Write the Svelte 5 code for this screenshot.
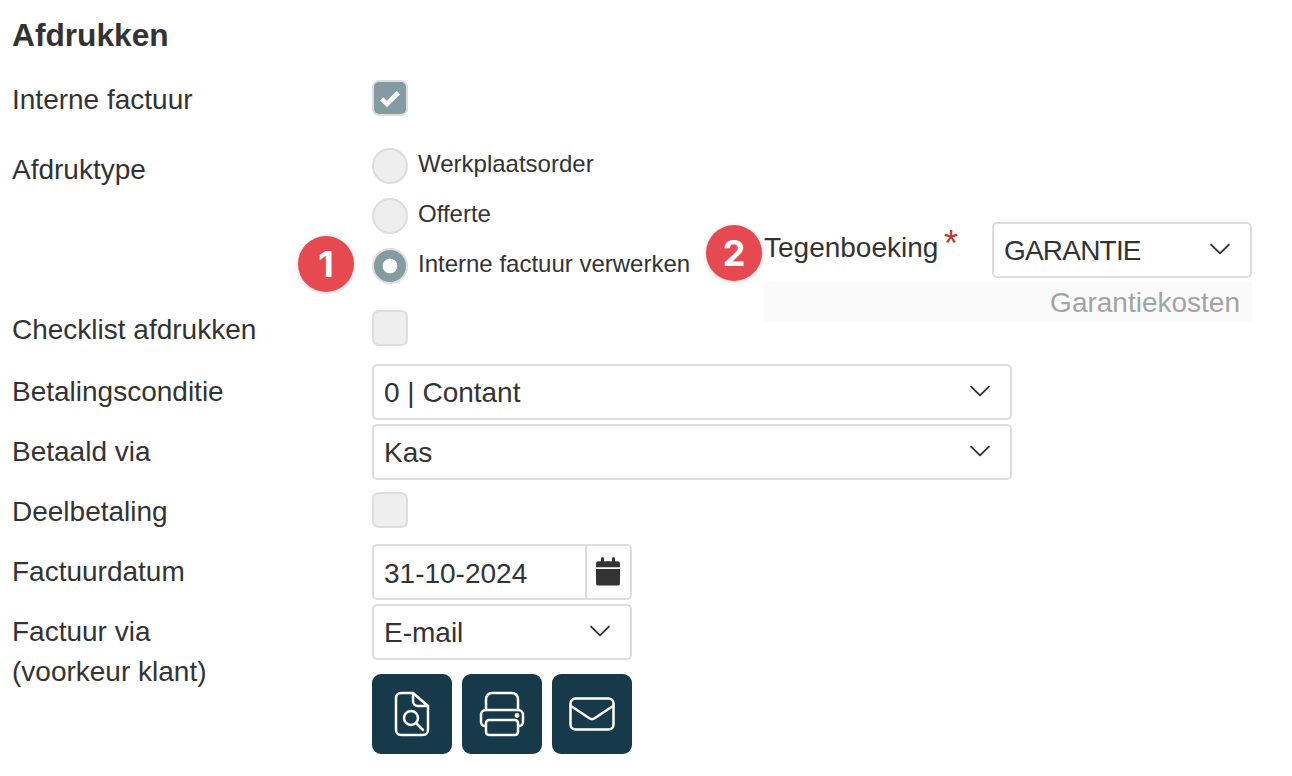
<script>
	const chevron = 'M1 1l8 8 8-8';
</script>

{#snippet caret()}
	<svg class="caret" width="20" height="12" viewBox="0 0 18 10" fill="none" stroke="#333" stroke-width="1.7" stroke-linecap="round" stroke-linejoin="round"><path d={chevron} /></svg>
{/snippet}

<main class="form">
	<h1>Afdrukken</h1>

	<div class="row first">
		<span class="lbl">Interne factuur</span>
		<span class="box checked">
			<svg width="22" height="18" viewBox="0 0 22 18"><path d="M2.5 10l5.5 5L19.500 3.500" fill="none" stroke="#fff" stroke-width="4.600" stroke-linejoin="miter" /></svg>
		</span>
	</div>

	<div class="row types">
		<span class="lbl type-lbl">Afdruktype</span>
		<div class="radios">
			<label class="radio"><span class="dot"></span><span>Werkplaatsorder</span></label>
			<label class="radio"><span class="dot"></span><span>Offerte</span></label>
			<label class="radio"><span class="dot on"></span><span>Interne factuur verwerken</span><span class="badge one">1</span></label>
		</div>
		<div class="panel">
			<span class="badge two">2</span>
			<div class="panel-top">
				<span class="tegen">Tegenboeking<span class="req">*</span></span>
				<div class="select short"><span class="tight">GARANTIE</span> {@render caret()}</div>
			</div>
			<div class="hint">Garantiekosten</div>
		</div>
	</div>

	<div class="row check-row">
		<span class="lbl">Checklist afdrukken</span>
		<span class="box"></span>
	</div>

	<div class="row field cond">
		<span class="lbl">Betalingsconditie</span>
		<div class="select wide">0 | Contant {@render caret()}</div>
	</div>
	<div class="row field">
		<span class="lbl">Betaald via</span>
		<div class="select wide">Kas {@render caret()}</div>
	</div>
	<div class="row check-row deel">
		<span class="lbl">Deelbetaling</span>
		<span class="box"></span>
	</div>
	<div class="row field date-row">
		<span class="lbl">Factuurdatum</span>
		<div class="date">
			<span class="date-val">31-10-2024</span>
			<span class="date-btn">
				<svg width="26" height="29" viewBox="0 0 26 28" preserveAspectRatio="none" fill="#333">
					<path d="M6 1.500a1.500 1.500 0 0 1 3 0V4h8V1.500a1.500 1.500 0 0 1 3 0V4h2.500A2.500 2.500 0 0 1 25 6.500V10H1V6.500A2.500 2.500 0 0 1 3.500 4H6z" />
					<path d="M1 11.500h24V25a2.500 2.500 0 0 1-2.500 2.500h-19A2.500 2.500 0 0 1 1 25z" />
				</svg>
			</span>
		</div>
	</div>
	<div class="row field via">
		<span class="lbl two-line">Factuur via<br />(voorkeur klant)</span>
		<div class="select small">E-mail {@render caret()}</div>
	</div>
	<div class="row actions">
		<span class="lbl"></span>
		<button aria-label="Voorbeeld">
			<svg width="36" height="46" viewBox="0 0 36 46" fill="none" stroke="#fff" stroke-width="2.500" stroke-linecap="round" stroke-linejoin="round">
				<path d="M19 2H7a5 5 0 0 0-5 5v32a5 5 0 0 0 5 5h22a5 5 0 0 0 5-5V15z" />
				<path d="M19 2v8a5 5 0 0 0 5 5h10" />
				<circle cx="17" cy="27" r="7" />
				<path d="M22 32l7 7" />
			</svg>
		</button>
		<button aria-label="Afdrukken">
			<svg width="46" height="46" viewBox="0 0 46 46" fill="none" stroke="#fff" stroke-width="2.500" stroke-linecap="round" stroke-linejoin="round">
				<path d="M7 19V8a6 6 0 0 1 6-6h20a6 6 0 0 1 6 6v11" />
				<path d="M6 35a4 4 0 0 1-4-4V24a5 5 0 0 1 5-5h32a5 5 0 0 1 5 5v7a4 4 0 0 1-4 4" />
				<rect x="7" y="29" width="32" height="15" rx="3" />
				<circle cx="38" cy="24.500" r="1.200" fill="#fff" />
			</svg>
		</button>
		<button aria-label="E-mail">
			<svg width="46" height="34" viewBox="0 0 46 34" fill="none" stroke="#fff" stroke-width="2.500" stroke-linecap="round" stroke-linejoin="round">
				<rect x="1.500" y="1.500" width="43" height="31" rx="5" />
				<path d="M2 9l18 12a5 5 0 0 0 6 0L44 9" />
			</svg>
		</button>
	</div>
</main>

<style>
	:global(body) {
		background: #fff;
	}

	.form {
		padding: 16px 0 0 12px;
		color: #333;
		font-family: "Liberation Sans", Arial, sans-serif;
		font-size: 28px;
		width: 1280px;
	}

	h1 {
		margin: 0;
		font-size: 31.700px;
		line-height: 38px;
		font-weight: 700;
	}

	.row {
		display: flex;
		align-items: flex-start;
	}

	.lbl {
		flex: 0 0 360px;
		line-height: 39px;
	}

	.type-lbl {
		padding-top: 2px;
	}

	.first {
		margin-top: 26px;
		height: 36px;
	}

	.types {
		margin-top: 32px;
		height: 162px;
	}

	.box {
		width: 36px;
		height: 36px;
		box-sizing: border-box;
		display: flex;
		align-items: center;
		justify-content: center;
		background: #eee;
		border: 2px solid #ddd;
		border-radius: 7px;
	}

	.box.checked {
		background: #849ba2;
	}

	.radios {
		flex: 0 0 392px;
		display: flex;
		flex-direction: column;
		gap: 14px;
	}

	.radio {
		position: relative;
		display: flex;
		align-items: flex-start;
		gap: 10px;
		height: 36px;
		font-size: 24px;
		line-height: 32px;
	}

	.dot {
		flex: none;
		width: 36px;
		height: 36px;
		box-sizing: border-box;
		border-radius: 50%;
		background: #eee;
		border: 2px solid #ddd;
	}

	.dot.on {
		background: radial-gradient(circle, #fff 0 7px, #849ba2 7.700px);
	}

	.badge {
		position: absolute;
		width: 56px;
		height: 56px;
		border-radius: 50%;
		background: #e64a50;
		color: #fff;
		font-family: Inter, "Liberation Sans", sans-serif;
		font-weight: 700;
		font-size: 36px;
		line-height: 56px;
		text-align: center;
		box-shadow: 0 1px 4px rgba(0, 0, 0, 0.2);
		z-index: 1;
	}

	.badge.one {
		left: -74px;
		top: -12px;
	}

	.badge.two {
		left: -58px;
		top: 77px;
	}

	.panel {
		position: relative;
		flex: 0 0 488px;
		padding-top: 74px;
	}

	.panel-top {
		display: flex;
		align-items: flex-start;
		justify-content: space-between;
	}

	.tegen {
		line-height: 52px;
		position: relative;
	}

	.req {
		position: absolute;
		left: 180px;
		top: 2px;
		color: #c0392b;
		font-size: 36px;
		line-height: 40px;
	}

	.select {
		box-sizing: border-box;
		height: 56px;
		border: 2px solid #ddd;
		border-radius: 5px;
		background: #fff;
		padding: 2px 20px 0 10px;
		display: flex;
		align-items: center;
		justify-content: space-between;
		line-height: 50px;
	}

	.tight {
		letter-spacing: -0.8px;
	}

	.caret {
		flex: none;
		margin-top: -4px;
	}

	.select.wide {
		width: 640px;
	}

	.select.short,
	.select.small {
		width: 260px;
	}

	.hint {
		margin-top: 4px;
		height: 40px;
		line-height: 42px;
		background: #fafafa;
		border-radius: 4px;
		text-align: right;
		padding-right: 12px;
		color: #a3a3a3;
	}

	.check-row {
		height: 36px;
	}

	.cond {
		margin-top: 18px;
	}

	.field + .field {
		margin-top: 4px;
	}

	.deel {
		margin-top: 12px;
	}

	.date-row {
		margin-top: 16px;
	}

	.field .lbl {
		line-height: 56px;
		height: 56px;
	}

	.field .two-line {
		line-height: 40px;
		padding-top: 8px;
		height: 48px;
	}

	.date {
		box-sizing: border-box;
		width: 260px;
		height: 56px;
		display: flex;
		border: 2px solid #ddd;
		border-radius: 5px;
		line-height: 56px;
	}

	.date-val {
		flex: 1;
		padding-left: 10px;
	}

	.date-btn {
		flex: 0 0 45px;
		box-sizing: border-box;
		padding-right: 2px;
		padding-bottom: 2px;
		border-left: 2px solid #ddd;
		display: flex;
		align-items: center;
		justify-content: center;
	}

	.actions {
		margin-top: 14px;
		gap: 10px;
	}

	.actions .lbl {
		margin-right: -10px;
	}

	button {
		width: 80px;
		height: 80px;
		padding: 0;
		border: 0;
		border-radius: 9px;
		background: #163a4a;
		display: flex;
		align-items: center;
		justify-content: center;
	}
</style>
